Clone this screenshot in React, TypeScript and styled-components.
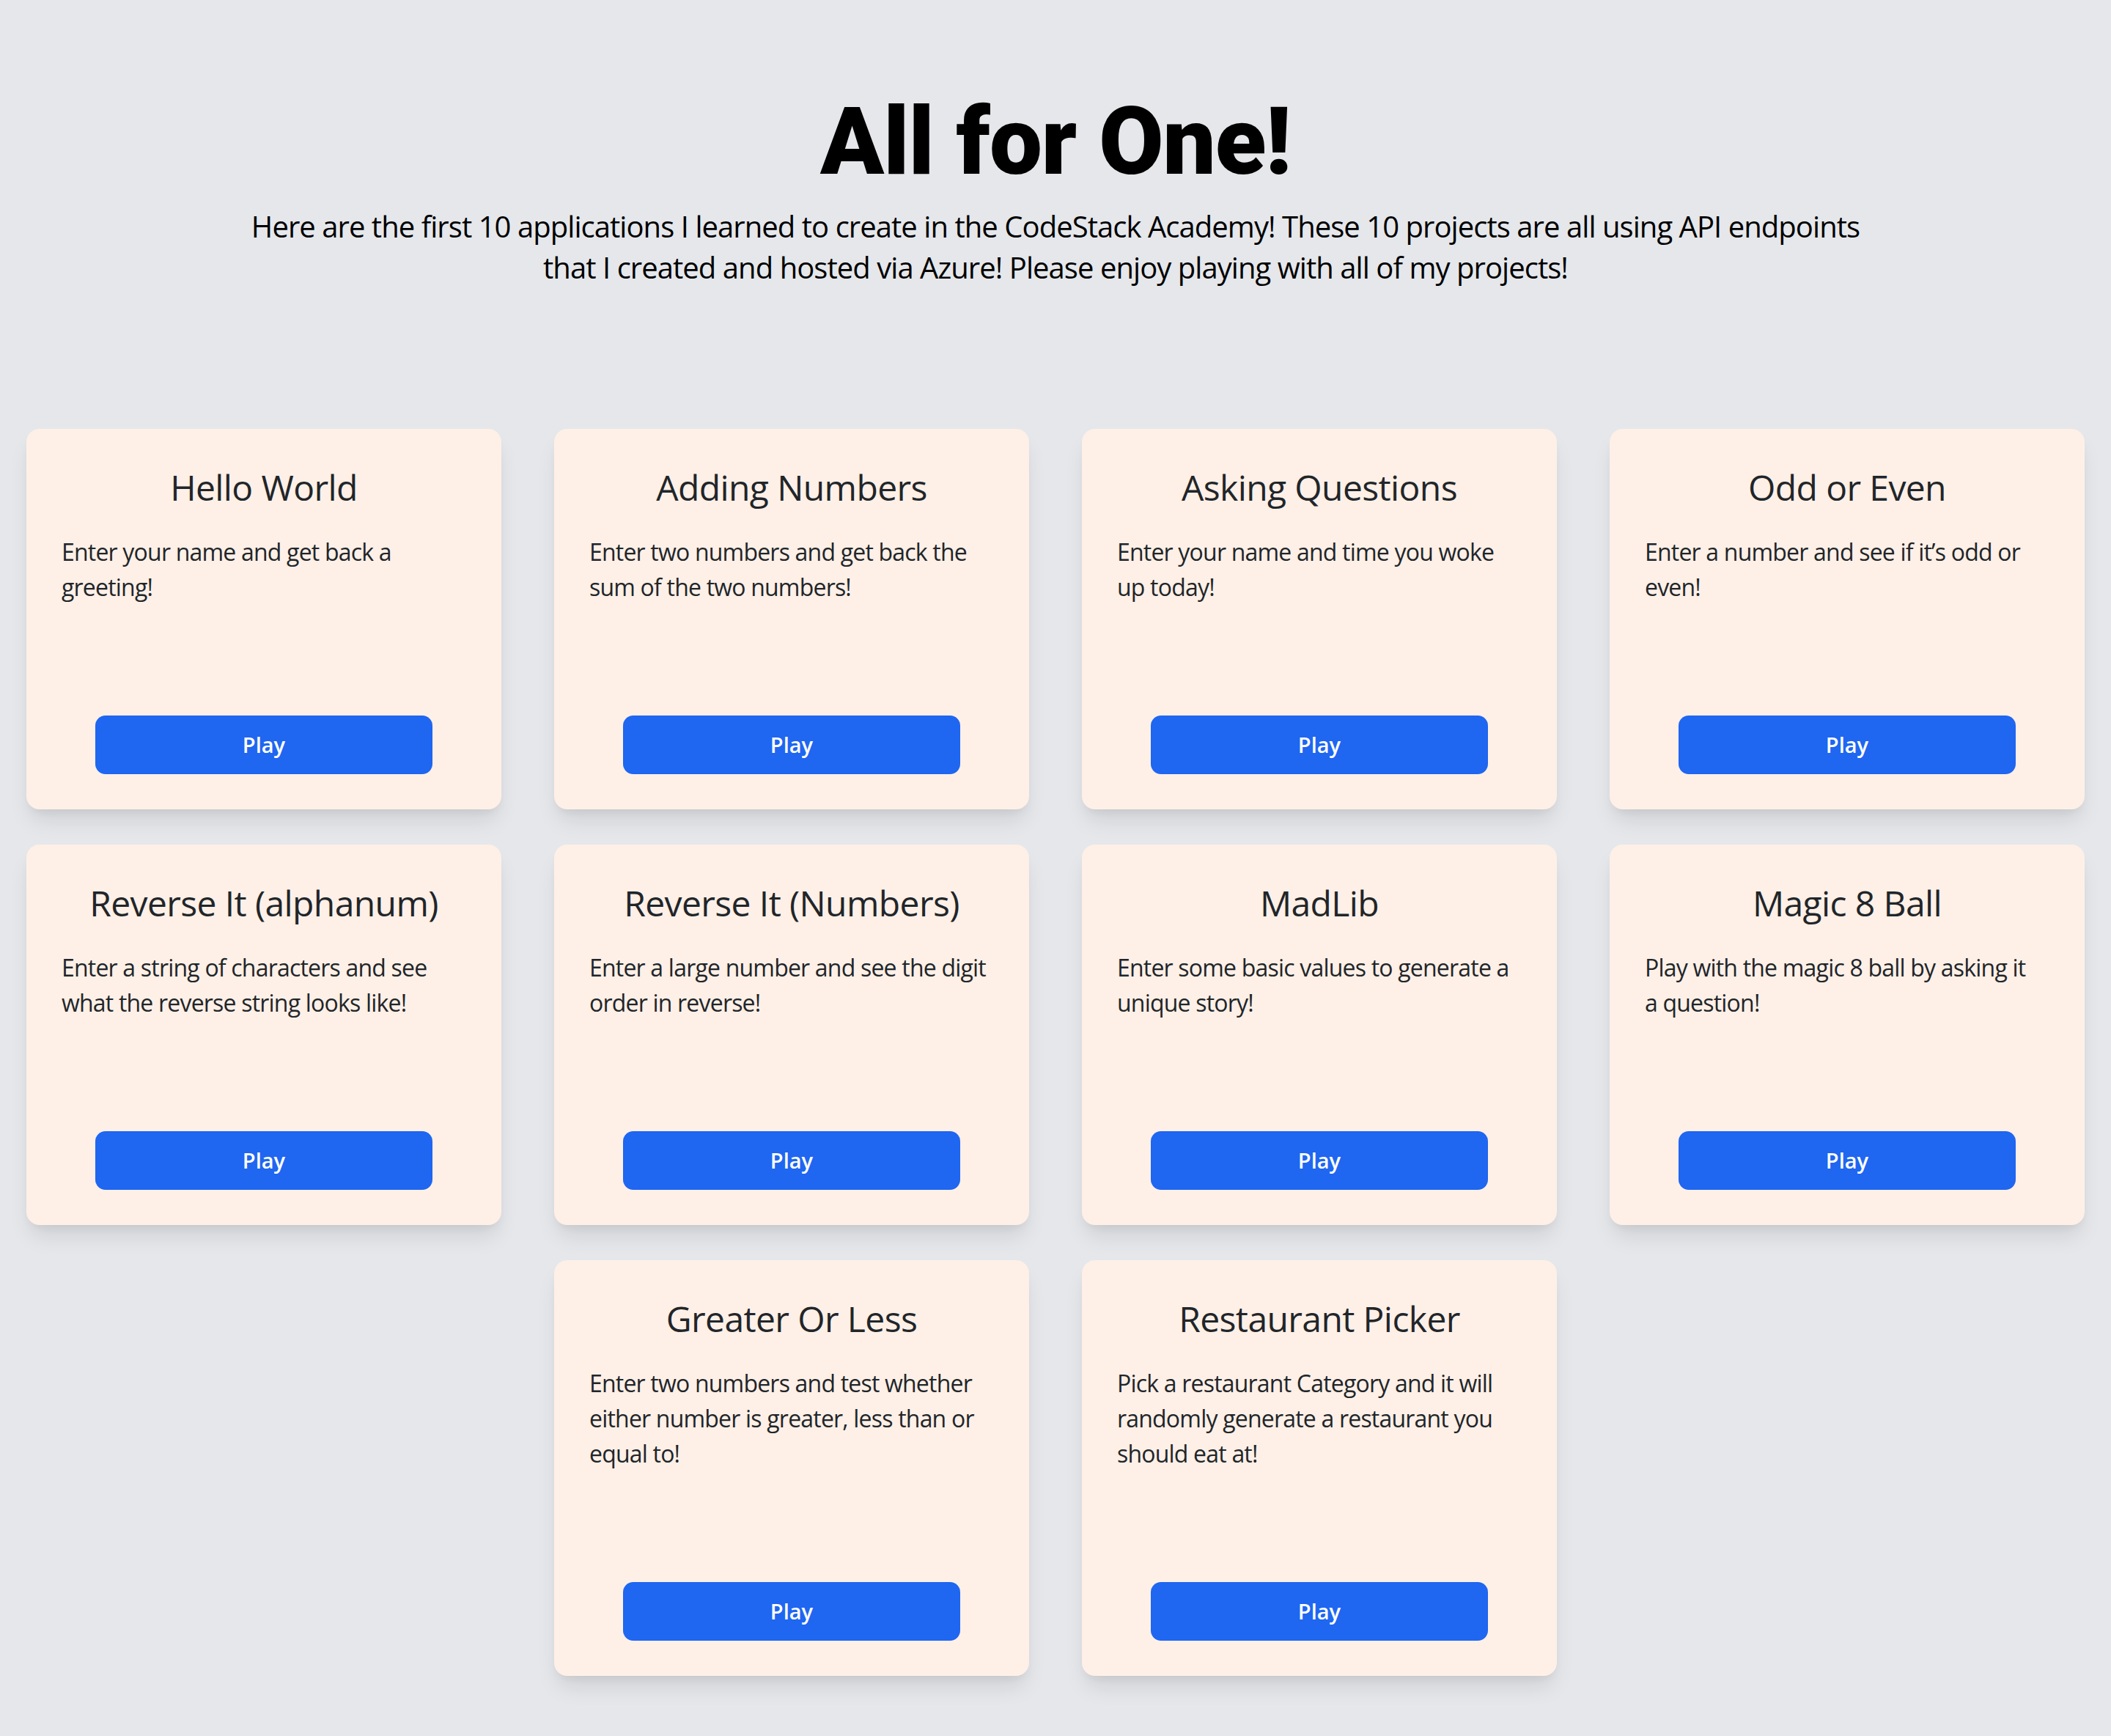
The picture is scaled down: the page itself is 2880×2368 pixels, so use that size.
import React, { ReactElement } from 'react';
import styled, { createGlobalStyle } from 'styled-components';

const GlobalStyle = createGlobalStyle`
  html,
  body {
    margin: 0;
    padding: 0;
    background-color: #e5e7eb;
  }

  body {
    font-family: 'Open Sans', 'Noto Sans', Arial, sans-serif;
    color: #212529;
  }

  * {
    box-sizing: border-box;
  }
`;

const Page = styled.main`
  min-height: 100vh;
  padding: 129px 36px 80px;
  background-color: #e5e7eb;
`;

const Header = styled.header`
  display: flex;
  flex-flow: column nowrap;
  align-items: center;
  text-align: center;
`;

const Title = styled.h1`
  margin: 0 0 24px;
  font-family: Roboto, 'Liberation Sans', sans-serif;
  font-size: 128px;
  font-weight: 900;
  line-height: 1;
  letter-spacing: -1px;
  color: #000;
`;

const Intro = styled.p`
  max-width: 2240px;
  margin: 0;
  font-size: 40px;
  line-height: 56px;
  letter-spacing: -0.95px;
  color: #000;
`;

const CardGrid = styled.section`
  display: flex;
  flex-flow: row wrap;
  justify-content: center;
  gap: 48px 72px;
  margin-top: 192px;
`;

const Card = styled.article`
  display: flex;
  flex-flow: column nowrap;
  width: 648px;
  padding: 50px 48px 48px;
  background-color: #fef0e7;
  border-radius: 18px;
  box-shadow: 0 20px 30px -6px rgba(0, 0, 0, 0.1),
    0 8px 12px -4px rgba(0, 0, 0, 0.05);
`;

const CardTitle = styled.h2`
  margin: 0 0 34px;
  font-size: 48px;
  font-weight: 400;
  line-height: 60px;
  letter-spacing: -0.6px;
  text-align: center;
  color: #212529;
`;

const CardText = styled.p`
  max-width: 542px;
  margin: 0 0 151px;
  font-size: 32px;
  line-height: 48px;
  letter-spacing: -0.8px;
  color: #212529;
`;

const PlayButton = styled.button`
  align-self: center;
  width: 460px;
  height: 80px;
  margin-top: auto;
  padding: 16px;
  border: none;
  border-radius: 14px;
  background-color: #1f66f1;
  color: #fff;
  font-family: inherit;
  font-size: 29px;
  font-weight: 600;
  line-height: 48px;
  cursor: pointer;
`;

type Project = {
  title: string;
  description: string;
};

const projects: Project[] = [
  {
    title: 'Hello World',
    description: 'Enter your name and get back a greeting!',
  },
  {
    title: 'Adding Numbers',
    description: 'Enter two numbers and get back the sum of the two numbers!',
  },
  {
    title: 'Asking Questions',
    description: 'Enter your name and time you woke up today!',
  },
  {
    title: 'Odd or Even',
    description: 'Enter a number and see if it’s odd or even!',
  },
  {
    title: 'Reverse It (alphanum)',
    description: 'Enter a string of characters and see what the reverse string looks like!',
  },
  {
    title: 'Reverse It (Numbers)',
    description: 'Enter a large number and see the digit order in reverse!',
  },
  {
    title: 'MadLib',
    description: 'Enter some basic values to generate a unique story!',
  },
  {
    title: 'Magic 8 Ball',
    description: 'Play with the magic 8 ball by asking it a question!',
  },
  {
    title: 'Greater Or Less',
    description:
      'Enter two numbers and test whether either number is greater, less than or equal to!',
  },
  {
    title: 'Restaurant Picker',
    description:
      'Pick a restaurant Category and it will randomly generate a restaurant you should eat at!',
  },
];

function ProjectCard({ title, description }: Project): ReactElement {
  return (
    <Card>
      <CardTitle>{title}</CardTitle>
      <CardText>{description}</CardText>
      <PlayButton type="button">Play</PlayButton>
    </Card>
  );
}

function App(): ReactElement {
  return (
    <>
      <GlobalStyle />
      <Page>
        <Header>
          <Title>All for One!</Title>
          <Intro>
            Here are the first 10 applications I learned to create in the CodeStack
            Academy! These 10 projects are all using API endpoints that I created and
            hosted via Azure! Please enjoy playing with all of my projects!
          </Intro>
        </Header>
        <CardGrid>
          {projects.map((project) => (
            <ProjectCard key={project.title} {...project} />
          ))}
        </CardGrid>
      </Page>
    </>
  );
}

export default App;
